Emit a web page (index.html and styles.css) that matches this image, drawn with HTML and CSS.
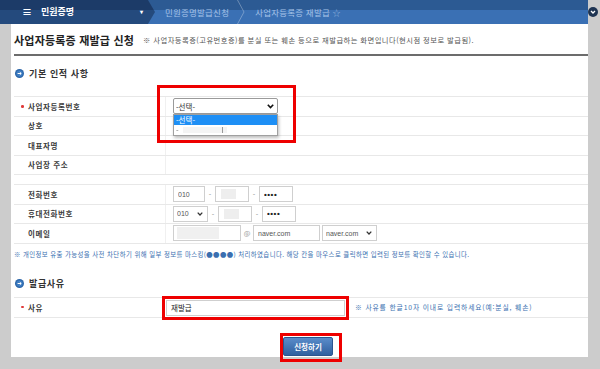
FILE: index.html
```html
<!DOCTYPE html>
<html lang="ko">
<head>
    <meta charset="UTF-8">
    <title>사업자등록증 재발급 신청</title>
    <link rel="stylesheet" href="styles.css">
</head>
<body>
    <!-- 상단 메뉴 경로 -->
    <div class="topbar">
        <div class="menu-home">
            <span class="menu-ico">≡</span>
            <span class="menu-name">민원증명</span>
            <span class="menu-caret">▾</span>
        </div>
        <div class="crumb">민원증명발급신청</div>
        <svg class="crumb-sep" width="8" height="24" viewBox="0 0 8 24"><polyline points="0.5,0 7,12 0.5,24" fill="none" stroke="rgba(255,255,255,0.3)" stroke-width="1"/></svg>
        <div class="crumb current">사업자등록증 재발급 <span class="star">☆</span></div>
    </div>

    <button class="scroll-btn" type="button">
        <svg width="10" height="10" viewBox="0 0 10 10"><circle cx="5" cy="5" r="5" fill="#1e3452"/><polyline points="3,4 5,6 7,4" fill="none" stroke="#fff" stroke-width="1.3"/></svg>
    </button>

    <div class="page">
        <div class="panel">
            <div class="page-title">
                <h2>사업자등록증 재발급 신청</h2>
                <span class="title-note">※ 사업자등록증(고유번호증)를 분실 또는 훼손 등으로 재발급하는 화면입니다(현시점 정보로 발급됨).</span>
            </div>

            <!-- 기본 인적 사항 -->
            <h3 class="sec-title sec-first">
                <svg class="sec-ico" width="9" height="9" viewBox="0 0 9 9"><circle cx="4.5" cy="4.5" r="4.5" fill="#2b65a8"/><circle cx="4.5" cy="4.5" r="3.2" fill="#3d7cc2"/><path d="M2.6 4.5h3.6M4.8 3.2l1.4 1.3-1.4 1.3" fill="none" stroke="#fff" stroke-width="1"/></svg>
                기본 인적 사항
            </h3>

            <div class="form-table">
                <div class="row">
                    <div class="th"><span class="req"></span>사업자등록번호</div>
                    <div class="td">
                        <div class="select-wrap">
                            <span class="sel-box biz">
                                <select class="sel-native"><option>-선택-</option></select>
                                <svg class="chev" width="7" height="5" viewBox="0 0 7 5"><polyline points="0.8,0.8 3.5,3.6 6.2,0.8" fill="none" stroke="#111" stroke-width="1.6"/></svg>
                            </span>
                            <ul class="drop-list">
                                <li class="on">-선택-</li>
                                <li><span class="blur-txt">-</span><span class="blur-box"></span></li>
                            </ul>
                            <div class="mark mark-select"></div>
                        </div>
                    </div>
                </div>
                <div class="row">
                    <div class="th pad">상호</div>
                    <div class="td"></div>
                </div>
                <div class="row">
                    <div class="th pad">대표자명</div>
                    <div class="td"></div>
                </div>
                <div class="row">
                    <div class="th pad">사업장 주소</div>
                    <div class="td"></div>
                </div>
            </div>

            <div class="form-table table-contact">
                <div class="row">
                    <div class="th pad">전화번호</div>
                    <div class="td">
                        <input class="inp w32" type="text" value="010">
                        <span class="dash">-</span>
                        <input class="inp w34 masked" type="text">
                        <span class="dash">-</span>
                        <input class="inp w34 dots" type="text" value="••••">
                    </div>
                </div>
                <div class="row">
                    <div class="th pad">휴대전화번호</div>
                    <div class="td">
                        <span class="sel-box w35">
                            <select class="sel-native"><option>010</option></select>
                            <svg class="chev" width="6" height="4" viewBox="0 0 6 4"><polyline points="0.7,0.6 3,3 5.3,0.6" fill="none" stroke="#333" stroke-width="1.3"/></svg>
                        </span>
                        <span class="dash">-</span>
                        <input class="inp w34 masked" type="text">
                        <span class="dash">-</span>
                        <input class="inp w34 dots" type="text" value="••••">
                    </div>
                </div>
                <div class="row">
                    <div class="th pad">이메일</div>
                    <div class="td">
                        <input class="inp w68 masked-wide" type="text">
                        <span class="at">@</span>
                        <input class="inp w67" type="text" value="naver.com">
                        <span class="sel-box w55">
                            <select class="sel-native"><option>naver.com</option></select>
                            <svg class="chev" width="6" height="4" viewBox="0 0 6 4"><polyline points="0.7,0.6 3,3 5.3,0.6" fill="none" stroke="#333" stroke-width="1.3"/></svg>
                        </span>
                    </div>
                </div>
            </div>

            <p class="mask-note">※ 개인정보 유출 가능성을 사전 차단하기 위해 일부 정보를 마스킹(●●●●) 처리하였습니다. 해당 칸을 마우스로 클릭하면 입력된 정보를 확인할 수 있습니다.</p>

            <!-- 발급사유 -->
            <h3 class="sec-title sec-second">
                <svg class="sec-ico" width="9" height="9" viewBox="0 0 9 9"><circle cx="4.5" cy="4.5" r="4.5" fill="#2b65a8"/><circle cx="4.5" cy="4.5" r="3.2" fill="#3d7cc2"/><path d="M2.6 4.5h3.6M4.8 3.2l1.4 1.3-1.4 1.3" fill="none" stroke="#fff" stroke-width="1"/></svg>
                발급사유
            </h3>

            <div class="form-table table-reason">
                <div class="row">
                    <div class="th"><span class="req"></span>사유</div>
                    <div class="td">
                        <span class="mark-inline">
                            <input class="inp reason" type="text" value="재발급">
                        </span>
                        <span class="reason-hint">※ 사유를 한글10자 이내로 입력하세요(예:분실, 훼손)</span>
                    </div>
                </div>
            </div>

            <div class="btn-area">
                <span class="mark-btn">
                    <button class="submit-btn" type="button">신청하기</button>
                </span>
            </div>
        </div>
    </div>
</body>
</html>
```

FILE: styles.css
```css
:root {
    --row-line: #e8e8e8;
    --mark-red: #ee0000;
    --label: #3c3c3c;
    --note-blue: #3a6fb0;
}

body {
    margin: 0;
    width: 600px;
    height: 369px;
    overflow: hidden;
    background: #cccccc;
    font-family: "Noto Sans CJK KR", "Liberation Sans", sans-serif;
    position: relative;
}

/* 상단 메뉴 */
.topbar {
    width: 588px;
    height: 24px;
    display: flex;
    align-items: center;
    background: linear-gradient(to bottom, #2c5a93 0, #2c5a93 42%, #3a70b4 42%, #3a70b4 100%);
    color: #fff;
}

.menu-home {
    width: 155px;
    height: 24px;
    box-sizing: border-box;
    padding-left: 22px;
    display: flex;
    align-items: center;
    background: linear-gradient(to bottom, #1c3b68 0, #1c3b68 42%, #244a7d 42%, #244a7d 100%);
    clip-path: polygon(0 0, 148px 0, 155px 50%, 148px 100%, 0 100%);
    font-size: 9px;
    font-weight: bold;
    line-height: 24px;
}

.menu-ico {
    font-size: 10px;
    margin-right: 9px;
}

.menu-caret {
    margin-left: auto;
    margin-right: 12px;
    font-size: 6px;
}

.crumb {
    font-size: 8.5px;
    line-height: 24px;
    color: #a6c3e8;
    padding-left: 10px;
    padding-right: 8px;
    letter-spacing: 0.2px;
}

.star {
    color: #8fb1dc;
    font-size: 8px;
}

.scroll-btn {
    position: absolute;
    top: 7px;
    right: 2px;
    padding: 0;
    border: none;
    background: none;
    line-height: 0;
}

/* 본문 */
.page {
    padding: 0 12px 0 11px;
}

.panel {
    height: 333px;
    background: #fff;
    padding-left: 3px;
    box-sizing: border-box;
}

.page-title {
    height: 32px;
    box-sizing: border-box;
    padding-bottom: 7px;
    display: flex;
    align-items: flex-end;
    border-bottom: 2px solid #6c6c6c;
}

.page-title h2 {
    margin: 0;
    font-size: 11px;
    line-height: 13px;
    color: #222;
    letter-spacing: 0.2px;
}

.title-note {
    margin-left: 9px;
    font-size: 7.3px;
    line-height: 13px;
    color: #555;
    letter-spacing: 0.45px;
}

.sec-title {
    display: flex;
    align-items: center;
    margin: 0;
    height: 14px;
    font-size: 9px;
    color: #333;
    letter-spacing: 0.6px;
}

.sec-first {
    margin-top: 10px;
    margin-bottom: 16px;
}

.sec-second {
    margin-top: 17px;
    margin-bottom: 6px;
}

.sec-ico {
    margin-left: 1px;
    margin-right: 5px;
}

/* 입력 표 */
.form-table {
    border-top: 1px solid var(--row-line);
}

.table-contact {
    margin-top: 9px;
}

.row {
    height: 19.5px;
    box-sizing: border-box;
    border-bottom: 1px solid var(--row-line);
    display: flex;
}

.th {
    width: 152px;
    flex-shrink: 0;
    box-sizing: border-box;
    padding-left: 7px;
    display: flex;
    align-items: center;
    border-right: 1px solid #f0f0f0;
    font-size: 7.5px;
    font-weight: bold;
    color: var(--label);
    letter-spacing: 0.6px;
}

.th.pad {
    padding-left: 14px;
}

.req {
    width: 2.5px;
    height: 2.5px;
    background: #e03a3a;
    border-radius: 50%;
    margin-right: 4.5px;
}

.td {
    flex: 1;
    display: flex;
    align-items: center;
    padding-left: 7px;
    font-size: 7px;
    color: #666;
}

/* 셀렉트 박스 */
.sel-box {
    display: flex;
    align-items: center;
    height: 16px;
    box-sizing: border-box;
    border: 1px solid #cfcfcf;
    padding-right: 4px;
    background: #fff;
}

.sel-native {
    appearance: none;
    -webkit-appearance: none;
    flex: 1;
    min-width: 0;
    height: 14px;
    border: none;
    background: transparent;
    padding: 0 0 0 3px;
    font-family: "Liberation Sans", sans-serif;
    font-size: 7px;
    color: #555;
    outline: none;
}

.sel-box.biz {
    width: 105px;
    border-color: #9a9a9a;
    border-radius: 2px;
    padding-right: 3px;
}

.sel-box.biz .sel-native {
    font-family: "Noto Sans CJK KR", sans-serif;
    font-size: 7.5px;
    color: #333;
    padding-left: 2px;
}

.select-wrap {
    position: relative;
    display: flex;
}

.drop-list {
    position: absolute;
    top: 16px;
    left: 0;
    width: 105px;
    margin: 0;
    padding: 0;
    list-style: none;
    background: #fff;
    border: 1px solid #a0a0a0;
    box-sizing: border-box;
    box-shadow: 1px 2px 3px rgba(0, 0, 0, 0.25);
    z-index: 5;
    font-size: 7.5px;
}

.drop-list li {
    height: 10px;
    line-height: 10px;
    padding-left: 2px;
    display: flex;
    align-items: center;
}

.drop-list li.on {
    background: #1e8ff5;
    color: #fff;
}

.blur-txt {
    color: #777;
    filter: blur(0.6px);
}

.blur-box {
    width: 44px;
    height: 6px;
    margin-left: 4px;
    background: linear-gradient(to right, #f4f4f4 0, #f4f4f4 88%, #999 88%, #999 92%, #f4f4f4 92%);
    filter: blur(0.4px);
}

.mark {
    position: absolute;
    border: 3px solid var(--mark-red);
    pointer-events: none;
}

.mark-select {
    left: -16px;
    top: -13px;
    width: 133px;
    height: 52px;
}

/* 텍스트 입력 */
.inp {
    height: 16px;
    box-sizing: border-box;
    border: 1px solid #cfcfcf;
    padding: 0 4px;
    font-size: 7px;
    font-family: "Liberation Sans", sans-serif;
    color: #555;
    background: #fff;
}

.w32 { width: 32px; }
.w34 { width: 34px; }
.w35 { width: 35px; }
.w55 { width: 55px; margin-left: 2px; }
.w67 { width: 67px; }
.w68 { width: 68px; }

.masked {
    background: #fff linear-gradient(#eeeeee, #eeeeee) no-repeat 5px 2px / 15px 10px;
}

.masked-wide {
    background: #fff linear-gradient(#f0f0f0, #f0f0f0) no-repeat 3px 1px / 42px 12px;
}

.dots {
    font-size: 8px;
    font-weight: bold;
    color: #222;
    letter-spacing: 0.5px;
}

.dash {
    width: 10px;
    text-align: center;
    font-size: 7px;
    color: #888;
}

.at {
    width: 12px;
    text-align: center;
    font-size: 7px;
    color: #999;
}

.mask-note {
    margin: 6px 0 0 0;
    font-size: 6.4px;
    line-height: 10px;
    color: var(--note-blue);
    letter-spacing: 0.4px;
}

/* 발급사유 */
.table-reason .th {
    width: 148px;
    border-right: none;
}

.table-reason .row {
    height: 20px;
}

.table-reason .td {
    padding-left: 0;
}

.mark-inline {
    display: flex;
    border: 3px solid var(--mark-red);
    padding: 1px;
    margin-top: 1px;
    position: relative;
    z-index: 2;
    background: #fff;
}

.reason {
    width: 179px;
    font-family: "Noto Sans CJK KR", sans-serif;
    font-size: 7.5px;
    color: #222;
    padding-left: 4px;
}

.reason-hint {
    margin-left: 6px;
    font-size: 6.8px;
    color: var(--note-blue);
    letter-spacing: 0.85px;
}

.btn-area {
    margin-top: 15px;
    display: flex;
    justify-content: center;
    padding-left: 20px;
}

.mark-btn {
    display: flex;
    border: 3px solid var(--mark-red);
    padding: 1px 6px 3px 0;
}

.submit-btn {
    width: 50px;
    height: 19px;
    border: 1px solid #2b5590;
    border-radius: 2px;
    background: linear-gradient(to bottom, #5a8cca, #2f609f);
    color: #fff;
    font-family: "Noto Sans CJK KR", sans-serif;
    font-size: 7.5px;
    font-weight: bold;
    padding: 0;
}
```
